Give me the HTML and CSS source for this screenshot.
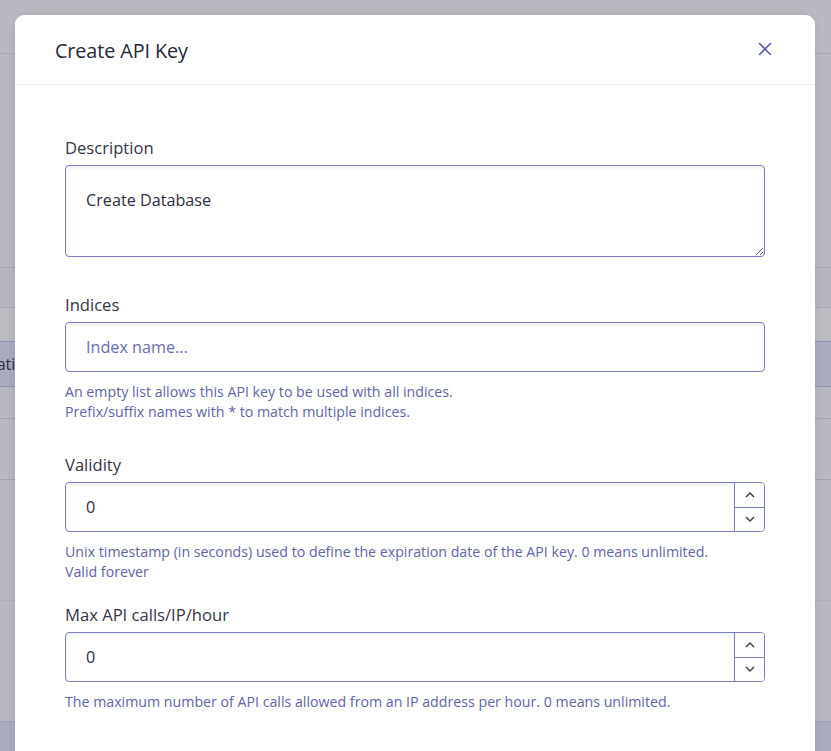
FILE: index.html
```html
<!DOCTYPE html>
<html lang="en">
<head>
<meta charset="utf-8">
<title>Create API Key</title>
<link rel="stylesheet" href="styles.css">
</head>
<body>
<div class="page">
  <div class="topbar"></div>
  <div class="spacer"></div>
  <div class="band band-a"></div>
  <div class="band band-b"></div>
  <div class="thead"><span class="th">Expiration</span></div>
  <div class="row row-1"></div>
  <div class="row row-2"></div>
  <div class="row row-3"></div>
  <div class="row row-4"></div>
  <div class="tfoot"></div>
</div>

<div class="modal">
  <div class="modal-header">
    <h2 class="modal-title">Create API Key</h2>
    <button class="close" aria-label="Close">
      <svg width="14" height="14" viewBox="0 0 14 14"><path d="M1.5 1.5 L12.5 12.5 M12.5 1.5 L1.5 12.5" stroke="#5b5ea3" stroke-width="1.6" fill="none" stroke-linecap="round"/></svg>
    </button>
  </div>
  <div class="modal-body">
    <div class="field field-desc">
      <label class="label">Description</label>
      <textarea class="textarea">Create Database</textarea>
    </div>
    <div class="field field-indices">
      <label class="label">Indices</label>
      <input class="input" type="text" placeholder="Index name...">
      <p class="help">An empty list allows this API key to be used with all indices.<br>Prefix/suffix names with * to match multiple indices.</p>
    </div>
    <div class="field field-validity">
      <label class="label">Validity</label>
      <div class="number">
        <input class="number-input" type="text" value="0">
        <div class="spin">
          <button class="spin-btn"><svg width="10" height="6" viewBox="0 0 10 6"><path d="M1 5 L5 1 L9 5" stroke="#3a3a48" stroke-width="1.4" fill="none"/></svg></button>
          <button class="spin-btn"><svg width="10" height="6" viewBox="0 0 10 6"><path d="M1 1 L5 5 L9 1" stroke="#3a3a48" stroke-width="1.4" fill="none"/></svg></button>
        </div>
      </div>
      <p class="help">Unix timestamp (in seconds) used to define the expiration date of the API key. 0 means unlimited.<br>Valid forever</p>
    </div>
    <div class="field field-max">
      <label class="label">Max API calls/IP/hour</label>
      <div class="number">
        <input class="number-input" type="text" value="0">
        <div class="spin">
          <button class="spin-btn"><svg width="10" height="6" viewBox="0 0 10 6"><path d="M1 5 L5 1 L9 5" stroke="#3a3a48" stroke-width="1.4" fill="none"/></svg></button>
          <button class="spin-btn"><svg width="10" height="6" viewBox="0 0 10 6"><path d="M1 1 L5 5 L9 1" stroke="#3a3a48" stroke-width="1.4" fill="none"/></svg></button>
        </div>
      </div>
      <p class="help">The maximum number of API calls allowed from an IP address per hour. 0 means unlimited.</p>
    </div>
  </div>
</div>
</body>
</html>
```

FILE: styles.css
```css
* { box-sizing: border-box; }

html, body {
  margin: 0;
  height: 100%;
  overflow: hidden;
}

body {
  font-family: "Open Sans", "Noto Sans", sans-serif;
  background: #b8b8c0;
  position: relative;
}

/* dimmed page behind the modal */
.page {
  display: flex;
  flex-direction: column;
  height: 751px;
}
.topbar {
  height: 54px;
  border-bottom: 1px solid #a6a6b4;
  background: #b9b9c1;
}
.spacer {
  height: 214px;
  border-bottom: 1px solid #a9a9b6;
}
.band-a {
  height: 40px;
  border-bottom: 1px solid #a9a9b6;
  background: #b6b6be;
}
.band-b {
  height: 34px;
  border-bottom: 1px solid #8f92be;
  background: #bbbbc2;
}
.thead {
  height: 45px;
  background: #aaabbd;
  border-bottom: 1px solid #8f92be;
  display: flex;
  align-items: center;
  overflow: hidden;
  font-size: 16px;
  color: #2c2c3c;
}
.th {
  margin-left: -41px;
  white-space: nowrap;
}
.row {
  border-bottom: 1px solid #a2a2b2;
  background: #b8b8c0;
}
.row-1 { height: 32px; }
.row-2 { height: 61px; }
.row-3 { height: 121px; border-bottom-color: #b0b0bb; }
.row-4 { height: 121px; }
.tfoot {
  flex: 1;
  background: #aaabbd;
}

/* modal */
.modal {
  position: absolute;
  top: 15px;
  left: 15px;
  width: 800px;
  height: 760px;
  background: #ffffff;
  border-radius: 9px;
  box-shadow: 0 2px 8px rgba(40, 40, 70, 0.12);
}
.modal-header {
  height: 70px;
  border-bottom: 1px solid #eeeef5;
  display: flex;
  align-items: center;
  justify-content: space-between;
  padding: 2px 43px 0 40px;
}
.modal-title {
  margin: 0;
  font-size: 19.8px;
  font-weight: 500;
  color: #27283a;
  letter-spacing: -0.1px;
}
.close {
  border: 0;
  background: transparent;
  padding: 0;
  margin-top: -4px;
  display: flex;
  cursor: pointer;
}

.modal-body {
  padding: 51px 50px 0 50px;
}

.field { display: flex; flex-direction: column; }
.field-desc { margin-bottom: 36px; }
.field-indices { margin-bottom: 31px; }
.field-validity { margin-bottom: 21px; }

.label {
  font-size: 16.6px;
  line-height: 24px;
  color: #353546;
  margin-bottom: 5px;
}

.textarea,
.input,
.number {
  border: 1px solid #7c7fbf;
  border-radius: 4px;
  box-shadow: inset 0 2px 4px rgba(110, 112, 170, 0.12);
  background: #fff;
}

.textarea {
  display: block;
  width: 100%;
  height: 92px;
  padding: 22px 20px;
  font-family: inherit;
  font-size: 16.2px;
  line-height: 24px;
  color: #2d2d3f;
  resize: vertical;
  outline: none;
}

.input {
  width: 100%;
  height: 50px;
  padding: 0 20px;
  font-family: inherit;
  font-size: 16.2px;
  color: #2d2d3f;
  outline: none;
}
.input::placeholder { color: #6a6db2; opacity: 1; }

.number {
  display: flex;
  height: 50px;
  overflow: hidden;
}
.number-input {
  flex: 1;
  min-width: 0;
  border: 0;
  background: transparent;
  padding: 0 20px;
  font-family: inherit;
  font-size: 16.2px;
  color: #2d2d3f;
  outline: none;
}
.spin {
  width: 30px;
  display: flex;
  flex-direction: column;
  border-left: 1px solid #7c7fbf;
}
.spin-btn {
  flex: 1;
  border: 0;
  background: #fff;
  padding: 0;
  display: flex;
  align-items: center;
  justify-content: center;
}
.spin-btn + .spin-btn { border-top: 1px solid #7c7fbf; }

.help {
  margin: 10px 0 0 0;
  font-size: 14.2px;
  line-height: 20px;
  color: #6264a8;
}
```
